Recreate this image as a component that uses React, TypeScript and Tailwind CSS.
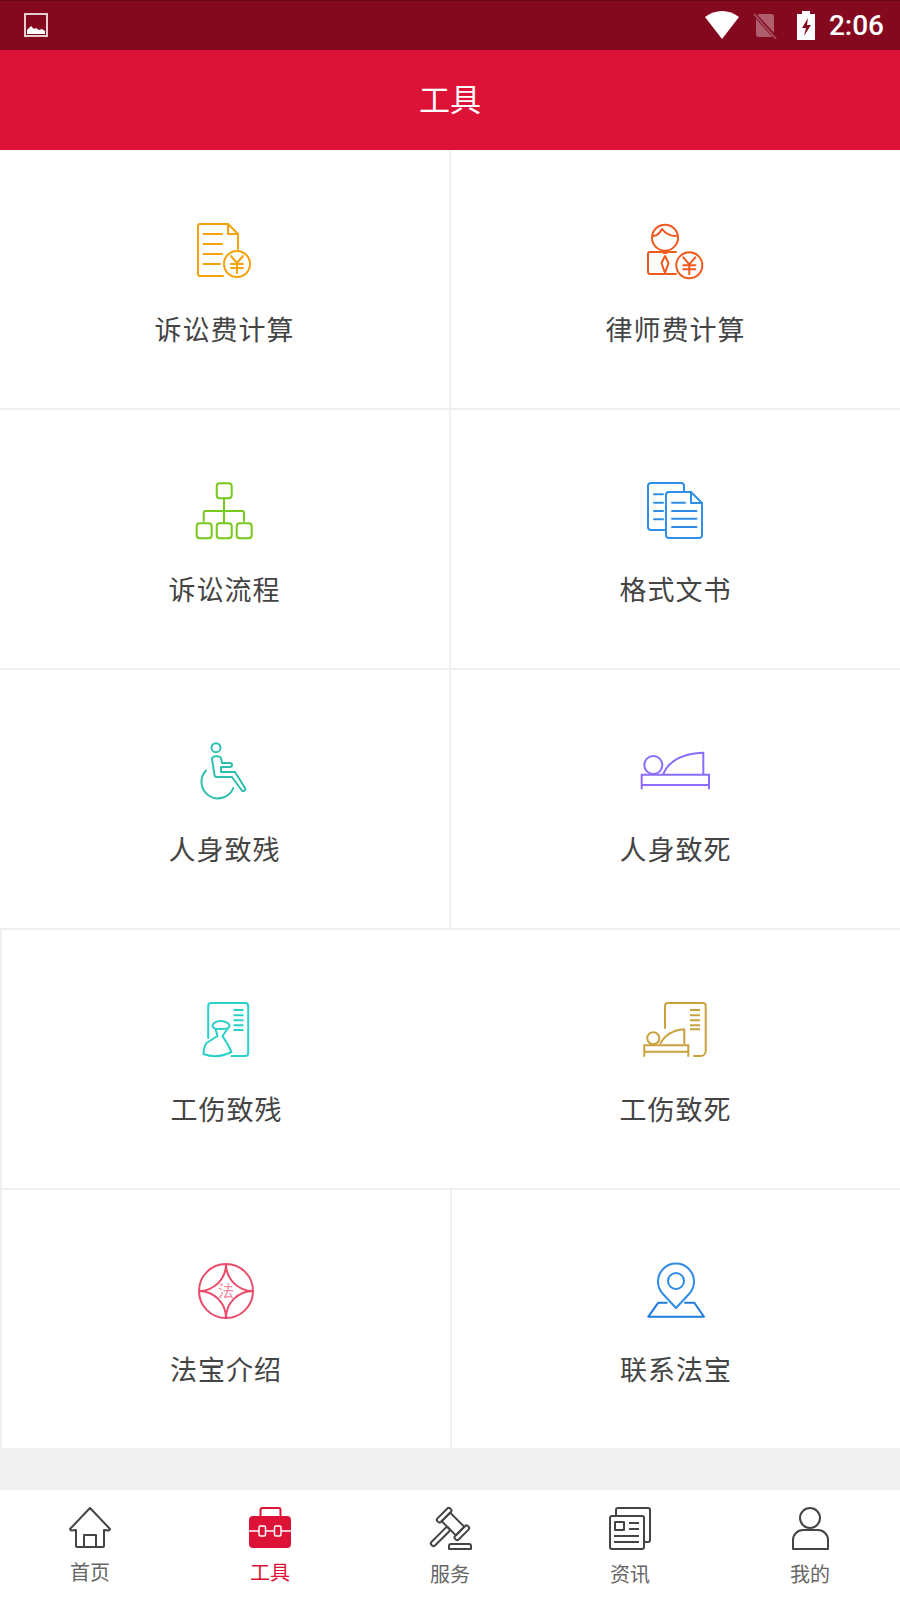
const YEN = (cx: number, cy: number) => (
  <>
    <circle cx={cx} cy={cy} r="13" fill="#fff" />
    <path d={`M${cx - 6} ${cy - 8}L${cx} ${cy - 1}L${cx + 6} ${cy - 8}M${cx} ${cy - 1}V${cy + 9}M${cx - 6} ${cy}H${cx + 6}M${cx - 6} ${cy + 4}H${cx + 6}`} />
  </>
);

function CellIcon({ vb, color, children }: { vb: string; color: string; children: React.ReactNode }) {
  return (
    <svg width="100" height="100" viewBox={vb} fill="none" stroke={color} strokeWidth="2" strokeLinecap="round" strokeLinejoin="round">
      {children}
    </svg>
  );
}

const iconFee = (
  <CellIcon vb="5 0 100 100" color="#f5a30a">
    <path d="M53 75H30a2 2 0 0 1-2-2V25a2 2 0 0 1 2-2h28l10 10v15" />
    <path d="M58 23v10h10M33.500 33H52M33.500 43H52M33.500 53H52M33.500 63H50" />
    {YEN(67, 63)}
  </CellIcon>
);

const iconLawyer = (
  <CellIcon vb="6 0 100 100" color="#ee5a1e">
    <circle cx="45" cy="36.700" r="13" />
    <path d="M33 35c4 0 7-3 9-7 3 4 7 7 14 7" />
    <path d="M56 73H30a2 2 0 0 1-2-2V53a2 2 0 0 1 2-2h26" />
    <path d="M43.500 52h3M45 55l3.500 7-3.500 10-3.500-10z" />
    {YEN(69.3, 64.3)}
  </CellIcon>
);

const iconFlow = (
  <CellIcon vb="5 0 100 100" color="#76c81a">
    <rect x="46.700" y="22.300" width="15" height="15" rx="3" />
    <rect x="26.700" y="62.300" width="15" height="15" rx="3" />
    <rect x="46.700" y="62.300" width="15" height="15" rx="3" />
    <rect x="66.700" y="62.300" width="15" height="15" rx="3" />
    <path d="M54 37v25M33.700 60V52a2 2 0 0 1 2-2H72a2 2 0 0 1 2 2v8" />
  </CellIcon>
);

const iconDocs = (
  <CellIcon vb="6 0 100 100" color="#2f8fe6">
    <path d="M45 69H31a3 3 0 0 1-3-3V25a3 3 0 0 1 3-3h30a3 3 0 0 1 3 3v6" />
    <path d="M71 31H49a3 3 0 0 0-3 3v40a3 3 0 0 0 3 3h30a3 3 0 0 0 3-3V42z" />
    <path d="M71 31v11h11M34 33.300h9M34 41.700h9M34 50h9M34 58.300h9M52 41.700h13M52 50h24.500M52 57.700h24.500M52 66h24.500" />
  </CellIcon>
);

const iconDisabled = (
  <CellIcon vb="5 -5 100 100" color="#2ebfb0">
    <circle cx="46" cy="21.700" r="4.500" />
    <path d="M42 33c0-3 7-4 9-1l1 5h8a2 2 0 0 1 0 4h-9v5h14l10 16a2 2 0 0 1-3.500 2L62 51H47a2.500 2.500 0 0 1-2.500-2z" />
    <path d="M36 44.500A16.500 16.500 0 1 0 63.300 62" />
  </CellIcon>
);

const iconDeath = (
  <CellIcon vb="1 -5 100 100" color="#8b6cff">
    <circle cx="28.300" cy="39" r="9" />
    <path d="M38.300 48C44 34 60 27 78.300 26.700V48M16.700 63.300V48.700H84V63.300M16.700 59H84" strokeLinecap="butt" strokeLinejoin="miter" />
  </CellIcon>
);

const iconWorkDisabled = (
  <CellIcon vb="1.500 -5 100 100" color="#28d0c8">
    <path d="M32.700 52V20a3 3 0 0 1 3-3h34a3 3 0 0 1 3 3v47a3 3 0 0 1-3 3H56" />
    <path d="M58 24h10M58 29.300h10M58 34.300h10M58 39.300h10M58 44h10" strokeLinecap="butt" />
    <path d="M37 40c0-3 4-5 8-5s9 2 9 5c0 2-4 3-9 3s-8-1-8-3z" />
    <path d="M40 43l2 7-11 7c-2 3-3 7-3 11 8 3 18 3 28-2l-4-8-5-8 5-7" />
  </CellIcon>
);

const iconWorkDeath = (
  <CellIcon vb="1 -5 100 100" color="#c9a23e">
    <path d="M40 42V20a3 3 0 0 1 3-3h34.700a3 3 0 0 1 3 3v45a5 5 0 0 1-5 5H69" />
    <path d="M65 24h10M65 29.300h10M65 34.300h10M65 39.300h10M65 43.300h10" strokeLinecap="butt" />
    <circle cx="28.300" cy="52.300" r="6" />
    <path d="M35 58c5-9 13-14 24.300-14.700V58" strokeLinecap="butt" />
    <path d="M19.300 70.700V59.300H63.300V70.700M19.300 65.700H63.300" strokeLinecap="butt" strokeLinejoin="miter" />
  </CellIcon>
);

const iconAbout = (
  <CellIcon vb="1 -5 100 100" color="#e94b6b">
    <circle cx="51" cy="45" r="27" />
    <path d="M51 18A27 27 0 0 1 24 45M51 18A27 27 0 0 0 78 45M51 72A27 27 0 0 0 24 45M51 72A27 27 0 0 1 78 45" />
    <text x="51" y="51" textAnchor="middle" fontSize="16" fill="#f08ba0" stroke="none" fontFamily="'Noto Sans CJK SC', sans-serif">法</text>
  </CellIcon>
);

const iconContact = (
  <CellIcon vb="1 -5 100 100" color="#2f8be6">
    <path d="M51 62L38 48A18 18 0 1 1 64 48Z" />
    <circle cx="51" cy="35" r="8" />
    <path d="M41.700 56.700H33.300L23.300 70.700H79L69.300 56.700H60" stroke="#1f7bdc" />
  </CellIcon>
);

function Cell({ label, icon, className }: { label: string; icon: React.ReactNode; className?: string }) {
  return (
    <div className={`h-[258px] bg-white flex flex-col items-center pt-[51px] ${className ?? ""}`}>
      {icon}
      <div className="mt-[10px] text-[27px] leading-[36px] tracking-[1px] text-[#444444]">{label}</div>
    </div>
  );
}

function TabIcon({ children }: { children: React.ReactNode }) {
  return (
    <svg width="48" height="44" viewBox="0 0 48 44" fill="none" stroke="#444444" strokeWidth="2" strokeLinecap="round" strokeLinejoin="round">
      {children}
    </svg>
  );
}

function Tab({ label, icon, active, raised }: { label: string; icon: React.ReactNode; active?: boolean; raised?: boolean }) {
  return (
    <div className="flex flex-col items-center pt-[16px]">
      {icon}
      <div className={`${raised ? "mt-[10px]" : "mt-[12px]"} text-[20px] leading-[24px] ${active ? "text-[#dd1237]" : "text-[#666666]"}`}>{label}</div>
    </div>
  );
}

export default function App() {
  return (
    <div className="w-[900px] h-[1600px] flex flex-col bg-[#f0f0f0] overflow-hidden font-['Noto_Sans_CJK_SC',sans-serif]">
      <div className="h-[50px] shrink-0 bg-[#84091f] border-t border-[#6a0517] flex items-center justify-between pl-[24px] pr-[16px]">
        <svg width="24" height="24" viewBox="0 0 24 24" className="-mt-[1px]">
          <rect x="1" y="1" width="22" height="22" fill="none" stroke="#ffffff" strokeOpacity="0.8" strokeWidth="2" />
          <path d="M3 21v-4l4-4 3 3 2-1 3 2 3-1 3 2v3z" fill="#ffffff" />
        </svg>
        <div className="flex items-center">
          <svg width="34" height="28" viewBox="0 0 34 28" className="-mt-[1px]">
            <path d="M0 6C10-2 24-2 34 6L17 28Z" fill="#ffffff" />
          </svg>
          <svg width="25" height="26" viewBox="0 0 25 26" className="ml-[14px]">
            <path d="M6 1h12a3 3 0 0 1 3 3v20H6a3 3 0 0 1-3-3V4z" fill="#ffffff" fillOpacity="0.35" />
            <path d="M1 1l23 25" stroke="#84091f" strokeWidth="4" />
            <path d="M1 1l22 25" stroke="#ffffff" strokeOpacity="0.25" strokeWidth="2" />
          </svg>
          <svg width="18" height="29" viewBox="0 0 18 29" className="ml-[19px]">
            <path d="M5 0h8v3h5v26H0V3h5z" fill="#ffffff" />
            <path d="M11 7L5 17h4l-2 8 7-11h-4z" fill="#84091f" />
          </svg>
          <span className="ml-[14px] mt-[1px] font-['Roboto',sans-serif] font-medium text-[28px] leading-[32px] text-white">2:06</span>
        </div>
      </div>
      <div className="h-[100px] shrink-0 bg-[#dd1237] flex items-center justify-center pb-[4px] text-[31px] text-white">工具</div>
      <div className="flex flex-col gap-[2px]">
        <div className="grid grid-cols-[449px_449px] gap-[2px]">
          <Cell label="诉讼费计算" icon={iconFee} />
          <Cell label="律师费计算" icon={iconLawyer} />
        </div>
        <div className="grid grid-cols-[449px_449px] gap-[2px]">
          <Cell label="诉讼流程" icon={iconFlow} />
          <Cell label="格式文书" icon={iconDocs} />
        </div>
        <div className="grid grid-cols-[449px_449px] gap-[2px]">
          <Cell label="人身致残" icon={iconDisabled} />
          <Cell label="人身致死" icon={iconDeath} />
        </div>
        <div className="pl-[2px] grid grid-cols-[449px_449px]">
          <Cell label="工伤致残" icon={iconWorkDisabled} />
          <Cell label="工伤致死" icon={iconWorkDeath} />
        </div>
        <div className="pl-[2px] grid grid-cols-[448px_448px] gap-[2px]">
          <Cell label="法宝介绍" icon={iconAbout} />
          <Cell label="联系法宝" icon={iconContact} />
        </div>
      </div>
      <div className="mt-[42px] h-[110px] shrink-0 bg-white grid grid-cols-5">
        <Tab
          raised
          label="首页"
          icon={
            <TabIcon>
              <path d="M24 2L4 23l1 1.500 5-.5v16a1 1 0 0 0 1 1h26a1 1 0 0 0 1-1V24l5 .5 1-1.500Z" />
              <path d="M18 41V29h12v12" />
            </TabIcon>
          }
        />
        <Tab
          raised
          active
          label="工具"
          icon={
            <svg width="48" height="44" viewBox="0 0 48 44">
              <path d="M14.500 10V4a2 2 0 0 1 2-2h16a2 2 0 0 1 2 2v6" fill="none" stroke="#dd1237" strokeWidth="2" />
              <rect x="3" y="10" width="42" height="32" rx="4" fill="#dd1237" />
              <path d="M3 25h42" stroke="#ffffff" strokeWidth="1.500" />
              <rect x="13" y="20" width="6.500" height="10" rx="1.500" fill="#dd1237" stroke="#ffffff" strokeWidth="1.500" />
              <rect x="28.500" y="20" width="6.500" height="10" rx="1.500" fill="#dd1237" stroke="#ffffff" strokeWidth="1.500" />
            </svg>
          }
        />
        <Tab
          label="服务"
          icon={
            <TabIcon>
              <g transform="rotate(45 27 18)">
                <rect x="17" y="12" width="20" height="12" />
                <rect x="12" y="9" width="5" height="18" rx="2" />
                <rect x="37" y="9" width="5" height="18" rx="2" />
                <rect x="24.500" y="24" width="5" height="24" rx="2" />
              </g>
              <path d="M23 43v-3a2 2 0 0 1 2-2h18a2 2 0 0 1 2 2v3z" />
            </TabIcon>
          }
        />
        <Tab
          label="资讯"
          icon={
            <TabIcon>
              <path d="M10 10V4a2 2 0 0 1 2-2h30a2 2 0 0 1 2 2v30a2 2 0 0 1-2 2h-4" />
              <rect x="4" y="10" width="34" height="33" rx="2" />
              <rect x="9" y="16" width="9" height="8" />
              <path d="M23 17h10M23 23h10M8 30h25M8 36h25" strokeLinecap="butt" />
            </TabIcon>
          }
        />
        <Tab
          label="我的"
          icon={
            <TabIcon>
              <circle cx="24" cy="12" r="10" />
              <path d="M7 43V34a10 10 0 0 1 10-10h15a10 10 0 0 1 10 10v9z" />
            </TabIcon>
          }
        />
      </div>
    </div>
  );
}
